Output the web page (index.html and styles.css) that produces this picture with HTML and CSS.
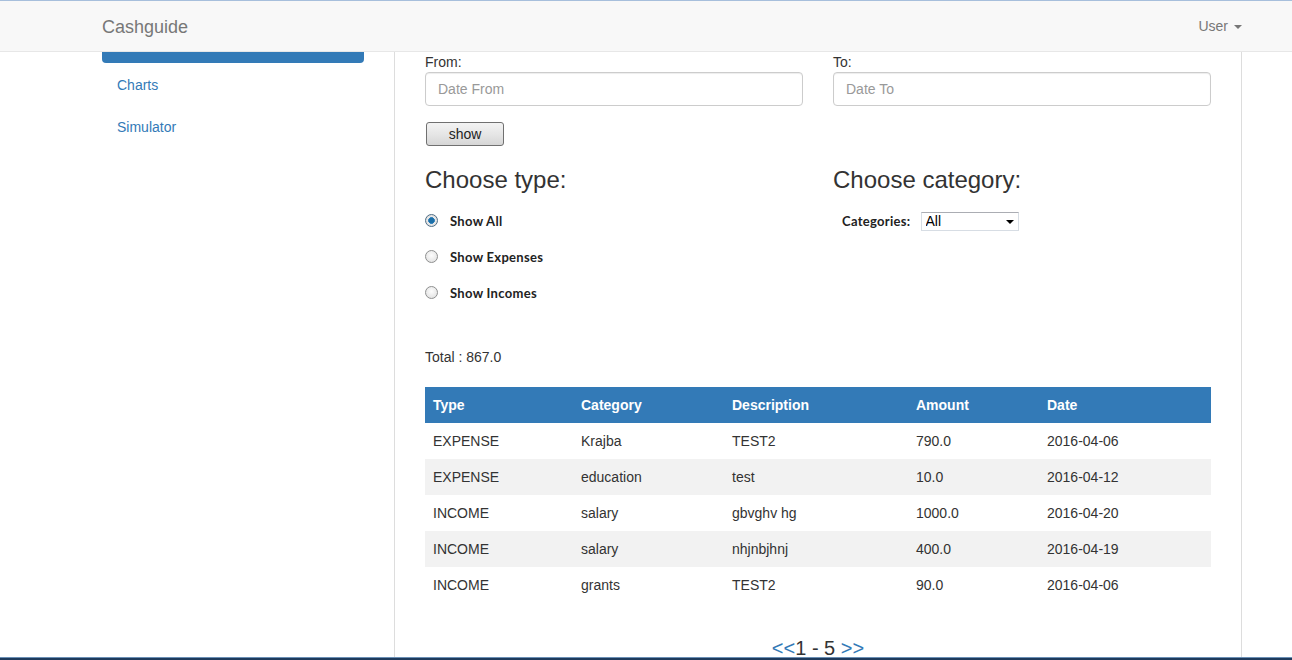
FILE: index.html
```html
<!DOCTYPE html>
<html>
<head>
<meta charset="utf-8">
<title>Cashguide</title>
<link rel="stylesheet" href="styles.css">
</head>
<body>
<header class="navbar">
  <div class="wrap nav-inner">
    <a class="brand">Cashguide</a>
    <a class="user">User <span class="caret"></span></a>
  </div>
</header>
<div class="wrap page">
  <aside class="sidebar">
    <div class="pill active"></div>
    <a class="pill">Charts</a>
    <a class="pill">Simulator</a>
  </aside>
  <main class="main">
    <div class="row">
      <div class="col">
        <label class="lbl">From:</label>
        <input class="field" type="text" placeholder="Date From">
        <button class="btn">show</button>
      </div>
      <div class="col">
        <label class="lbl">To:</label>
        <input class="field" type="text" placeholder="Date To">
      </div>
    </div>
    <div class="row">
      <div class="col">
        <h3 class="h3">Choose type:</h3>
        <label class="radio-row"><input type="radio" name="t" class="radio" checked><span>Show All</span></label>
        <label class="radio-row"><input type="radio" name="t" class="radio"><span>Show Expenses</span></label>
        <label class="radio-row"><input type="radio" name="t" class="radio"><span>Show Incomes</span></label>
      </div>
      <div class="col">
        <h3 class="h3">Choose category:</h3>
        <div class="cat-row">
          <span class="cat-lbl">Categories:</span>
          <span class="select-wrap"><select class="select"><option>All</option></select></span>
        </div>
      </div>
    </div>
    <p class="total">Total : 867.0</p>
    <table class="table">
      <thead>
        <tr><th class="c1">Type</th><th class="c2">Category</th><th class="c3">Description</th><th class="c4">Amount</th><th class="c5">Date</th></tr>
      </thead>
      <tbody>
        <tr><td>EXPENSE</td><td>Krajba</td><td>TEST2</td><td>790.0</td><td>2016-04-06</td></tr>
        <tr><td>EXPENSE</td><td>education</td><td>test</td><td>10.0</td><td>2016-04-12</td></tr>
        <tr><td>INCOME</td><td>salary</td><td>gbvghv hg</td><td>1000.0</td><td>2016-04-20</td></tr>
        <tr><td>INCOME</td><td>salary</td><td>nhjnbjhnj</td><td>400.0</td><td>2016-04-19</td></tr>
        <tr><td>INCOME</td><td>grants</td><td>TEST2</td><td>90.0</td><td>2016-04-06</td></tr>
      </tbody>
    </table>
    <div class="pager"><a class="pg-link">&lt;&lt;</a>1 - 5 <a class="pg-link">&gt;&gt;</a></div>
  </main>
</div>
<div class="taskbar"></div>
</body>
</html>
```
FILE: styles.css
```css
* { box-sizing: border-box; }
html, body { height: 100%; }
body {
  margin: 0;
  font-family: "Liberation Sans", Arial, sans-serif;
  font-size: 14px;
  line-height: 20px;
  color: #333;
  background: #fff;
  display: flex;
  flex-direction: column;
  overflow: hidden;
}
.wrap { margin-left: 102px; width: 1140px; }
.navbar {
  flex: none;
  height: 52px;
  background: #f8f8f8;
  border-top: 1px solid #a7bfdc;
  border-bottom: 1px solid #e7e7e7;
}
.nav-inner {
  height: 50px;
  display: flex;
  align-items: center;
  justify-content: space-between;
}
.brand { font-size: 18px; color: #777; line-height: 20px; margin-top: 2px; }
.user { color: #777; font-size: 14px; display: flex; align-items: center; gap: 6px; margin-right: 0; }
.caret {
  width: 0; height: 0;
  border-left: 4px solid transparent;
  border-right: 4px solid transparent;
  border-top: 4px solid #777;
  margin-top: 1px;
}
.page { flex: 1; display: flex; min-height: 0; }
.sidebar { width: 292px; padding-right: 30px; flex: none; }
.pill {
  display: block;
  height: 40px;
  padding: 10px 15px;
  color: #337ab7;
  margin-top: 2px;
  border-radius: 4px;
}
.pill.active {
  height: 11px;
  margin-top: 0;
  padding: 0;
  background: #337ab7;
  border-radius: 0 0 4px 4px;
}
.main {
  width: 848px;
  flex: none;
  border-left: 1px solid #ddd;
  border-right: 1px solid #ddd;
  padding: 0 30px;
}
.row { display: flex; gap: 30px; }
.col { width: 378px; }
.lbl { display: block; height: 20px; line-height: 20px; color: #333; }
.field {
  display: block;
  width: 100%;
  height: 34px;
  margin: 0;
  padding: 6px 12px;
  font: 14px "Liberation Sans", Arial, sans-serif;
  border: 1px solid #ccc;
  border-radius: 4px;
  color: #555;
  box-shadow: inset 0 1px 1px rgba(0,0,0,.075);
}
.field::placeholder { color: #999; }
.btn {
  display: block;
  margin: 16px 0 0 1px;
  width: 78px;
  height: 24px;
  padding: 0;
  font: 14px "Liberation Sans", Arial, sans-serif;
  color: #222;
  border: 1px solid #707070;
  border-radius: 3px;
  background: linear-gradient(#f3f3f3, #e6e6e6 50%, #d6d6d6);
}
.h3 {
  margin: 21px 0 9px;
  font-size: 24px;
  font-weight: 400;
  line-height: 26px;
  color: #333;
}
.radio-row {
  display: flex;
  align-items: center;
  height: 36px;
  font-family: Lato, "Open Sans", sans-serif;
  font-weight: 700;
  font-size: 13px;
  letter-spacing: 0.3px;
  color: #222;
}
.radio-row span { margin-top: 2px; }
.radio {
  appearance: none;
  -webkit-appearance: none;
  width: 13px; height: 13px;
  margin: 0 12px 0 0;
  border: 1px solid #8e8f8f;
  border-radius: 50%;
  background: radial-gradient(circle at 50% 40%, #fdfdfd, #dcdcdc);
}
.radio:checked {
  background: radial-gradient(circle, #1b6fa8 0 2.6px, #4a90c4 3.2px, #e9e9e9 3.6px, #d4d4d4);
  border-color: #4f6e86;
}
.cat-row {
  display: flex;
  align-items: center;
  height: 36px;
  padding-left: 9px;
}
.cat-lbl {
  font-family: Lato, "Open Sans", sans-serif;
  font-weight: 700;
  font-size: 13px;
  letter-spacing: 0.3px;
  color: #222;
  margin-right: 10px;
  margin-top: 2px;
}
.select-wrap { position: relative; display: inline-block; margin-top: 2px; }
.select-wrap::after {
  content: "";
  position: absolute;
  right: 5px;
  top: 8px;
  border-left: 4px solid transparent;
  border-right: 4px solid transparent;
  border-top: 4px solid #000;
  pointer-events: none;
}
.select {
  appearance: none;
  -webkit-appearance: none;
  display: block;
  width: 98px;
  height: 19px;
  padding: 0 4px;
  font: 14px "Liberation Sans", Arial, sans-serif;
  line-height: 17px;
  color: #000;
  background: #fff;
  border: 1px solid #d7dde4;
  border-top-color: #abadb3;
  border-radius: 0;
}
.total { margin: 37px 0 20px; line-height: 20px; }
.table {
  width: 786px;
  border-collapse: collapse;
  border-spacing: 0;
  table-layout: fixed;
}
.table th {
  background: #337ab7;
  color: #fff;
  font-weight: 700;
  text-align: left;
  height: 36px;
  padding: 0 8px;
}
.table td { height: 36px; padding: 0 8px; }
.table tbody tr:nth-child(even) td { background: #f2f2f2; }
.c1 { width: 148px; }
.c2 { width: 151px; }
.c3 { width: 184px; }
.c4 { width: 131px; }
.c5 { width: 172px; }
.pager {
  margin-top: 34px;
  text-align: center;
  font-size: 20px;
  line-height: 22px;
  color: #333;
}
.pg-link { color: #337ab7; }
.taskbar {
  position: fixed;
  left: 0; right: 0; bottom: 0;
  height: 3px;
  background: #1e3a5c;
  border-top: 1px solid #6a8fb5;
}
```
